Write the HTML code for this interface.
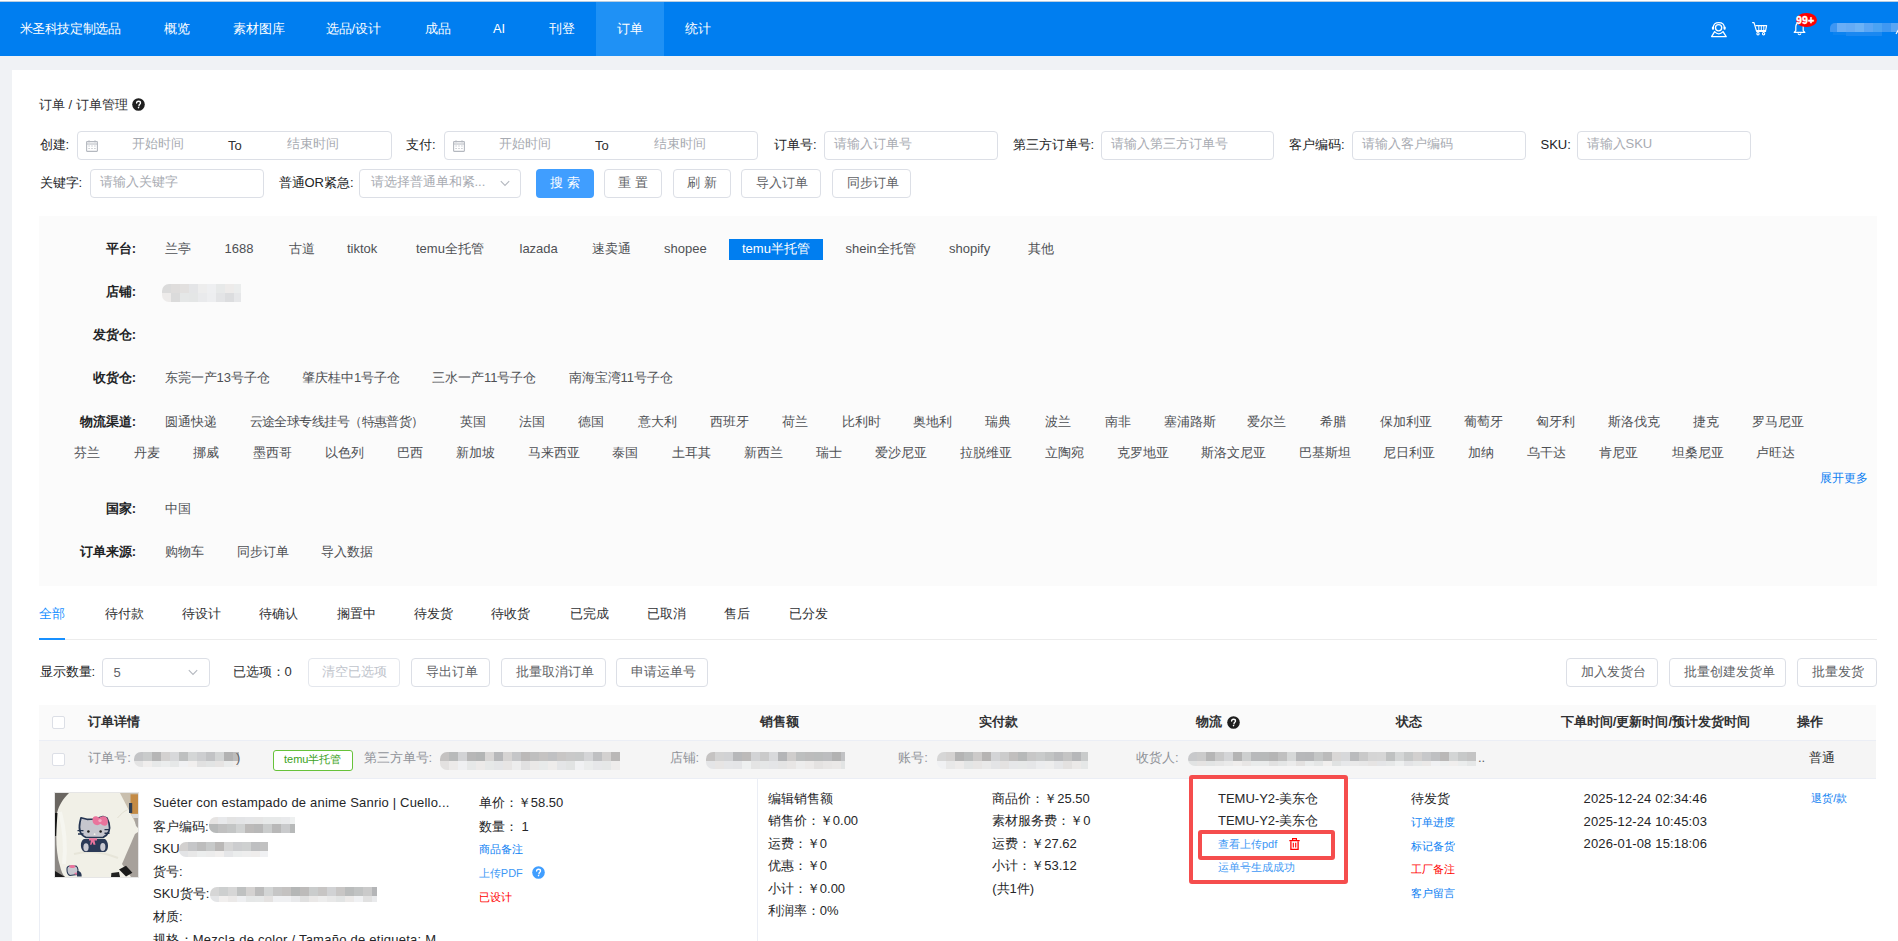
<!DOCTYPE html>
<html><head><meta charset="utf-8"><title>订单管理</title>
<style>
html,body{margin:0;padding:0;width:1898px;height:941px;overflow:hidden;background:#fff;position:relative;font-family:"Liberation Sans",sans-serif}
.t{position:absolute;white-space:nowrap;line-height:20px;font-weight:500}
.b{position:absolute}
.blur{background:repeating-linear-gradient(90deg,#dcdcdc 0 9px,#e8e8e8 9px 17px,#d2d2d2 17px 24px,#e4e4e4 24px 31px);border-radius:6px;filter:blur(1px);opacity:.95}
</style></head><body>
<div class="b" style="left:0px;top:1px;width:1898px;height:55px;background:#007ef0"></div>
<div class="b" style="left:0px;top:1px;width:1898px;height:1px;background:#b9cde0"></div>
<div class="b" style="left:596px;top:2px;width:68px;height:54px;background:#1f91f5"></div>
<span class="t " style="left:19.5px;top:19.0px;font-size:12.7px;color:#fff;letter-spacing:-0.4px">米圣科技定制选品</span>
<span class="t " style="left:163.5px;top:19.0px;font-size:12.8px;color:#fff;">概览</span>
<span class="t " style="left:232.5px;top:19.0px;font-size:12.8px;color:#fff;">素材图库</span>
<span class="t " style="left:325.5px;top:19.0px;font-size:12.8px;color:#fff;">选品/设计</span>
<span class="t " style="left:424.5px;top:19.0px;font-size:12.8px;color:#fff;">成品</span>
<span class="t " style="left:493px;top:19.0px;font-size:12.8px;color:#fff;">AI</span>
<span class="t " style="left:548.5px;top:19.0px;font-size:12.8px;color:#fff;">刊登</span>
<span class="t " style="left:616.5px;top:19.0px;font-size:12.8px;color:#fff;">订单</span>
<span class="t " style="left:685px;top:19.0px;font-size:12.8px;color:#fff;">统计</span>
<div class="b" style="left:0px;top:56px;width:1898px;height:885px;background:#f0f2f5"></div>
<div class="b" style="left:12px;top:70px;width:1886px;height:871px;background:#fff"></div>
<span class="t " style="left:39px;top:95.0px;font-size:13px;color:#303133;">订单 / 订单管理</span>
<svg class="b" style="left:132px;top:98px" width="13" height="13" viewBox="0 0 13 13"><circle cx="6.5" cy="6.5" r="6.3" fill="#1f1f1f"/><path d="M4.6 5.1c0-1.1.9-1.9 1.95-1.9 1.1 0 1.95.8 1.95 1.75 0 1.3-1.45 1.4-1.45 2.45v.35" stroke="#fff" stroke-width="1.35" fill="none" stroke-linecap="round"/><circle cx="6.55" cy="9.6" r=".8" fill="#fff"/></svg>
<span class="t " style="left:39.5px;top:135.0px;font-size:13px;color:#222325;">创建:</span>
<div class="b" style="left:77px;top:131px;width:315px;height:29px;border:1px solid #dcdfe6;border-radius:4px;background:#fff;box-sizing:border-box"></div>
<svg class="b" style="left:86px;top:139.5px" width="12" height="12" viewBox="0 0 12 12"><rect x="0.6" y="1.6" width="10.8" height="9.8" rx="0.6" fill="none" stroke="#b4b8bf" stroke-width="1.1"/><line x1="0.6" y1="4" x2="11.4" y2="4" stroke="#b4b8bf" stroke-width="1"/><line x1="3" y1="0.3" x2="3" y2="2.4" stroke="#b4b8bf" stroke-width="1"/><line x1="9" y1="0.3" x2="9" y2="2.4" stroke="#b4b8bf" stroke-width="1"/><g fill="#c4c7cc"><rect x="2.4" y="5.5" width="1.4" height="1"/><rect x="5.3" y="5.5" width="1.4" height="1"/><rect x="8.2" y="5.5" width="1.4" height="1"/><rect x="2.4" y="8" width="1.4" height="1"/><rect x="5.3" y="8" width="1.4" height="1"/><rect x="8.2" y="8" width="1.4" height="1"/></g></svg>
<span class="t " style="left:131.5px;top:133.5px;font-size:13px;color:#a8abb2;">开始时间</span>
<span class="t " style="left:228px;top:136.0px;font-size:13px;color:#303133;">To</span>
<span class="t " style="left:287px;top:133.5px;font-size:13px;color:#a8abb2;">结束时间</span>
<span class="t " style="left:406px;top:135.0px;font-size:13px;color:#222325;">支付:</span>
<div class="b" style="left:444px;top:131px;width:314px;height:29px;border:1px solid #dcdfe6;border-radius:4px;background:#fff;box-sizing:border-box"></div>
<svg class="b" style="left:453px;top:139.5px" width="12" height="12" viewBox="0 0 12 12"><rect x="0.6" y="1.6" width="10.8" height="9.8" rx="0.6" fill="none" stroke="#b4b8bf" stroke-width="1.1"/><line x1="0.6" y1="4" x2="11.4" y2="4" stroke="#b4b8bf" stroke-width="1"/><line x1="3" y1="0.3" x2="3" y2="2.4" stroke="#b4b8bf" stroke-width="1"/><line x1="9" y1="0.3" x2="9" y2="2.4" stroke="#b4b8bf" stroke-width="1"/><g fill="#c4c7cc"><rect x="2.4" y="5.5" width="1.4" height="1"/><rect x="5.3" y="5.5" width="1.4" height="1"/><rect x="8.2" y="5.5" width="1.4" height="1"/><rect x="2.4" y="8" width="1.4" height="1"/><rect x="5.3" y="8" width="1.4" height="1"/><rect x="8.2" y="8" width="1.4" height="1"/></g></svg>
<span class="t " style="left:498.5px;top:133.5px;font-size:13px;color:#a8abb2;">开始时间</span>
<span class="t " style="left:595px;top:136.0px;font-size:13px;color:#303133;">To</span>
<span class="t " style="left:654px;top:133.5px;font-size:13px;color:#a8abb2;">结束时间</span>
<span class="t " style="left:774px;top:135.0px;font-size:13px;color:#222325;">订单号:</span>
<div class="b" style="left:824px;top:131px;width:174px;height:29px;border:1px solid #dcdfe6;border-radius:4px;background:#fff;box-sizing:border-box"></div>
<span class="t " style="left:834px;top:134.0px;font-size:13px;color:#a8abb2;">请输入订单号</span>
<span class="t " style="left:1012.5px;top:135.0px;font-size:13px;color:#222325;">第三方订单号:</span>
<div class="b" style="left:1101px;top:131px;width:173px;height:29px;border:1px solid #dcdfe6;border-radius:4px;background:#fff;box-sizing:border-box"></div>
<span class="t " style="left:1110.5px;top:134.0px;font-size:13px;color:#a8abb2;">请输入第三方订单号</span>
<span class="t " style="left:1289px;top:135.0px;font-size:13px;color:#222325;">客户编码:</span>
<div class="b" style="left:1352px;top:131px;width:174px;height:29px;border:1px solid #dcdfe6;border-radius:4px;background:#fff;box-sizing:border-box"></div>
<span class="t " style="left:1361.5px;top:134.0px;font-size:13px;color:#a8abb2;">请输入客户编码</span>
<span class="t " style="left:1540.5px;top:135.0px;font-size:13px;color:#222325;">SKU:</span>
<div class="b" style="left:1577px;top:131px;width:174px;height:29px;border:1px solid #dcdfe6;border-radius:4px;background:#fff;box-sizing:border-box"></div>
<span class="t " style="left:1586.5px;top:134.0px;font-size:13px;color:#a8abb2;">请输入SKU</span>
<span class="t " style="left:39.5px;top:173.0px;font-size:13px;color:#222325;">关键字:</span>
<div class="b" style="left:90px;top:169px;width:174px;height:29px;border:1px solid #dcdfe6;border-radius:4px;background:#fff;box-sizing:border-box"></div>
<span class="t " style="left:100px;top:172.0px;font-size:13px;color:#a8abb2;">请输入关键字</span>
<span class="t " style="left:278.5px;top:173.0px;font-size:13px;color:#222325;">普通OR紧急:</span>
<div class="b" style="left:359px;top:169px;width:162px;height:29px;border:1px solid #dcdfe6;border-radius:4px;background:#fff;box-sizing:border-box"></div>
<span class="t " style="left:370.5px;top:172.0px;font-size:13px;color:#a8abb2;">请选择普通单和紧...</span>
<svg class="b" style="left:500px;top:180px" width="10" height="7" viewBox="0 0 10 7"><path d="M0.8 1.2 L5 5.4 L9.2 1.2" stroke="#b4b8bf" stroke-width="1.1" fill="none"/></svg>
<div class="b" style="left:536px;top:169px;width:58px;height:29px;background:#409eff;border-radius:4px"></div>
<span class="t " style="left:550px;top:172.5px;font-size:13px;color:#fff;">搜&nbsp;索</span>
<div class="b" style="left:604px;top:169px;width:58px;height:29px;border:1px solid #dcdfe6;border-radius:4px;background:#fff;box-sizing:border-box"></div>
<span class="t " style="left:618px;top:173.0px;font-size:13px;color:#606266;">重&nbsp;置</span>
<div class="b" style="left:673px;top:169px;width:58px;height:29px;border:1px solid #dcdfe6;border-radius:4px;background:#fff;box-sizing:border-box"></div>
<span class="t " style="left:687px;top:173.0px;font-size:13px;color:#606266;">刷&nbsp;新</span>
<div class="b" style="left:741px;top:169px;width:80px;height:29px;border:1px solid #dcdfe6;border-radius:4px;background:#fff;box-sizing:border-box"></div>
<span class="t " style="left:756px;top:173.0px;font-size:13px;color:#606266;">导入订单</span>
<div class="b" style="left:832px;top:169px;width:79px;height:29px;border:1px solid #dcdfe6;border-radius:4px;background:#fff;box-sizing:border-box"></div>
<span class="t " style="left:846.5px;top:173.0px;font-size:13px;color:#606266;">同步订单</span>
<div class="b" style="left:39px;top:216px;width:1838px;height:370px;background:#fbfbfb"></div>
<span class="t" style="right:1762px;top:239.0px;font-size:13px;color:#222325;font-weight:700">平台:</span>
<span class="t " style="left:165px;top:239.0px;font-size:13px;color:#4e5054;">兰亭</span>
<span class="t " style="left:224.5px;top:239.0px;font-size:13px;color:#4e5054;">1688</span>
<span class="t " style="left:288.5px;top:239.0px;font-size:13px;color:#4e5054;">古道</span>
<span class="t " style="left:347px;top:239.0px;font-size:13px;color:#4e5054;">tiktok</span>
<span class="t " style="left:416px;top:239.0px;font-size:13px;color:#4e5054;">temu全托管</span>
<span class="t " style="left:519.5px;top:239.0px;font-size:13px;color:#4e5054;">lazada</span>
<span class="t " style="left:591.5px;top:239.0px;font-size:13px;color:#4e5054;">速卖通</span>
<span class="t " style="left:664px;top:239.0px;font-size:13px;color:#4e5054;">shopee</span>
<span class="t " style="left:845.5px;top:239.0px;font-size:13px;color:#4e5054;">shein全托管</span>
<span class="t " style="left:949px;top:239.0px;font-size:13px;color:#4e5054;">shopify</span>
<span class="t " style="left:1027.5px;top:239.0px;font-size:13px;color:#4e5054;">其他</span>
<div class="b" style="left:729px;top:239px;width:94px;height:21px;background:#007ef0"></div>
<span class="t " style="left:742px;top:239.0px;font-size:13px;color:#fff;">temu半托管</span>
<span class="t" style="right:1762px;top:282.0px;font-size:13px;color:#222325;font-weight:700">店铺:</span>
<svg class="b" style="left:162px;top:284px" width="79" height="18" viewBox="0 0 79 18"><defs><clipPath id="c2"><rect x="0" y="0" width="99" height="18" rx="7"/></clipPath></defs><g clip-path="url(#c2)"><rect x="0" y="0" width="9" height="9" fill="#dbdbdb"/><rect x="9" y="0" width="9" height="9" fill="#dfdddc"/><rect x="18" y="0" width="9" height="9" fill="#e2e0df"/><rect x="27" y="0" width="9" height="9" fill="#e4e5e7"/><rect x="36" y="0" width="9" height="9" fill="#ededed"/><rect x="45" y="0" width="9" height="9" fill="#eeeff1"/><rect x="54" y="0" width="9" height="9" fill="#e7e9e9"/><rect x="63" y="0" width="9" height="9" fill="#edebea"/><rect x="72" y="0" width="7" height="9" fill="#ebeded"/><rect x="0" y="9" width="9" height="9" fill="#edebea"/><rect x="9" y="9" width="9" height="9" fill="#dbdbdb"/><rect x="18" y="9" width="9" height="9" fill="#e5e7e7"/><rect x="27" y="9" width="9" height="9" fill="#e4e6e6"/><rect x="36" y="9" width="9" height="9" fill="#e9eaec"/><rect x="45" y="9" width="9" height="9" fill="#edeef0"/><rect x="54" y="9" width="9" height="9" fill="#e3e4e6"/><rect x="63" y="9" width="9" height="9" fill="#dcdddf"/><rect x="72" y="9" width="7" height="9" fill="#e6e7e9"/></g></svg>
<span class="t" style="right:1762px;top:325.0px;font-size:13px;color:#222325;font-weight:700">发货仓:</span>
<span class="t" style="right:1762px;top:368.0px;font-size:13px;color:#222325;font-weight:700">收货仓:</span>
<span class="t " style="left:164.5px;top:368.0px;font-size:13px;color:#4e5054;">东莞一产13号子仓</span>
<span class="t " style="left:302px;top:368.0px;font-size:13px;color:#4e5054;">肇庆桂中1号子仓</span>
<span class="t " style="left:432px;top:368.0px;font-size:13px;color:#4e5054;">三水一产11号子仓</span>
<span class="t " style="left:568.5px;top:368.0px;font-size:13px;color:#4e5054;">南海宝湾11号子仓</span>
<span class="t" style="right:1762px;top:412.0px;font-size:13px;color:#222325;font-weight:700">物流渠道:</span>
<span class="t " style="left:164.5px;top:412.0px;font-size:13px;color:#4e5054;">圆通快递</span>
<span class="t " style="left:249.5px;top:412.0px;font-size:13px;color:#4e5054;letter-spacing:-0.55px">云途全球专线挂号（特惠普货）</span>
<span class="t " style="left:459.5px;top:412.0px;font-size:13px;color:#4e5054;">英国</span>
<span class="t " style="left:518.5px;top:412.0px;font-size:13px;color:#4e5054;">法国</span>
<span class="t " style="left:578.2px;top:412.0px;font-size:13px;color:#4e5054;">德国</span>
<span class="t " style="left:637.5px;top:412.0px;font-size:13px;color:#4e5054;">意大利</span>
<span class="t " style="left:710.4px;top:412.0px;font-size:13px;color:#4e5054;">西班牙</span>
<span class="t " style="left:781.8px;top:412.0px;font-size:13px;color:#4e5054;">荷兰</span>
<span class="t " style="left:841.5px;top:412.0px;font-size:13px;color:#4e5054;">比利时</span>
<span class="t " style="left:913.3px;top:412.0px;font-size:13px;color:#4e5054;">奥地利</span>
<span class="t " style="left:985.1px;top:412.0px;font-size:13px;color:#4e5054;">瑞典</span>
<span class="t " style="left:1044.8px;top:412.0px;font-size:13px;color:#4e5054;">波兰</span>
<span class="t " style="left:1104.5px;top:412.0px;font-size:13px;color:#4e5054;">南非</span>
<span class="t " style="left:1163.5px;top:412.0px;font-size:13px;color:#4e5054;">塞浦路斯</span>
<span class="t " style="left:1247.4px;top:412.0px;font-size:13px;color:#4e5054;">爱尔兰</span>
<span class="t " style="left:1319.9px;top:412.0px;font-size:13px;color:#4e5054;">希腊</span>
<span class="t " style="left:1379.9px;top:412.0px;font-size:13px;color:#4e5054;">保加利亚</span>
<span class="t " style="left:1464.2px;top:412.0px;font-size:13px;color:#4e5054;">葡萄牙</span>
<span class="t " style="left:1536px;top:412.0px;font-size:13px;color:#4e5054;">匈牙利</span>
<span class="t " style="left:1607.5px;top:412.0px;font-size:13px;color:#4e5054;">斯洛伐克</span>
<span class="t " style="left:1692.5px;top:412.0px;font-size:13px;color:#4e5054;">捷克</span>
<span class="t " style="left:1751.8px;top:412.0px;font-size:13px;color:#4e5054;">罗马尼亚</span>
<span class="t " style="left:74.2px;top:442.5px;font-size:13px;color:#4e5054;">芬兰</span>
<span class="t " style="left:133.5px;top:442.5px;font-size:13px;color:#4e5054;">丹麦</span>
<span class="t " style="left:193.2px;top:442.5px;font-size:13px;color:#4e5054;">挪威</span>
<span class="t " style="left:252.9px;top:442.5px;font-size:13px;color:#4e5054;">墨西哥</span>
<span class="t " style="left:324.7px;top:442.5px;font-size:13px;color:#4e5054;">以色列</span>
<span class="t " style="left:397.2px;top:442.5px;font-size:13px;color:#4e5054;">巴西</span>
<span class="t " style="left:455.5px;top:442.5px;font-size:13px;color:#4e5054;">新加坡</span>
<span class="t " style="left:528px;top:442.5px;font-size:13px;color:#4e5054;">马来西亚</span>
<span class="t " style="left:612.3px;top:442.5px;font-size:13px;color:#4e5054;">泰国</span>
<span class="t " style="left:672.3px;top:442.5px;font-size:13px;color:#4e5054;">土耳其</span>
<span class="t " style="left:743.7px;top:442.5px;font-size:13px;color:#4e5054;">新西兰</span>
<span class="t " style="left:815.5px;top:442.5px;font-size:13px;color:#4e5054;">瑞士</span>
<span class="t " style="left:875.2px;top:442.5px;font-size:13px;color:#4e5054;">爱沙尼亚</span>
<span class="t " style="left:959.9px;top:442.5px;font-size:13px;color:#4e5054;">拉脱维亚</span>
<span class="t " style="left:1044.8px;top:442.5px;font-size:13px;color:#4e5054;">立陶宛</span>
<span class="t " style="left:1116.6px;top:442.5px;font-size:13px;color:#4e5054;">克罗地亚</span>
<span class="t " style="left:1200.9px;top:442.5px;font-size:13px;color:#4e5054;">斯洛文尼亚</span>
<span class="t " style="left:1299px;top:442.5px;font-size:13px;color:#4e5054;">巴基斯坦</span>
<span class="t " style="left:1383.3px;top:442.5px;font-size:13px;color:#4e5054;">尼日利亚</span>
<span class="t " style="left:1467.6px;top:442.5px;font-size:13px;color:#4e5054;">加纳</span>
<span class="t " style="left:1526.6px;top:442.5px;font-size:13px;color:#4e5054;">乌干达</span>
<span class="t " style="left:1599.1px;top:442.5px;font-size:13px;color:#4e5054;">肯尼亚</span>
<span class="t " style="left:1671.6px;top:442.5px;font-size:13px;color:#4e5054;">坦桑尼亚</span>
<span class="t " style="left:1755.9px;top:442.5px;font-size:13px;color:#4e5054;">卢旺达</span>
<span class="t " style="left:1820px;top:467.5px;font-size:12px;color:#0b7ef2;">展开更多</span>
<span class="t" style="right:1762px;top:499.0px;font-size:13px;color:#222325;font-weight:700">国家:</span>
<span class="t " style="left:164.5px;top:499.0px;font-size:13px;color:#4e5054;">中国</span>
<span class="t" style="right:1762px;top:542.0px;font-size:13px;color:#222325;font-weight:700">订单来源:</span>
<span class="t " style="left:164.5px;top:542.0px;font-size:13px;color:#4e5054;">购物车</span>
<span class="t " style="left:236.5px;top:542.0px;font-size:13px;color:#4e5054;">同步订单</span>
<span class="t " style="left:320.5px;top:542.0px;font-size:13px;color:#4e5054;">导入数据</span>
<span class="t " style="left:39.3px;top:604.0px;font-size:13px;color:#1890ff;">全部</span>
<span class="t " style="left:104.8px;top:604.0px;font-size:13px;color:#303133;">待付款</span>
<span class="t " style="left:181.6px;top:604.0px;font-size:13px;color:#303133;">待设计</span>
<span class="t " style="left:259px;top:604.0px;font-size:13px;color:#303133;">待确认</span>
<span class="t " style="left:336.5px;top:604.0px;font-size:13px;color:#303133;">搁置中</span>
<span class="t " style="left:414px;top:604.0px;font-size:13px;color:#303133;">待发货</span>
<span class="t " style="left:491.3px;top:604.0px;font-size:13px;color:#303133;">待收货</span>
<span class="t " style="left:569.5px;top:604.0px;font-size:13px;color:#303133;">已完成</span>
<span class="t " style="left:646.9px;top:604.0px;font-size:13px;color:#303133;">已取消</span>
<span class="t " style="left:723.7px;top:604.0px;font-size:13px;color:#303133;">售后</span>
<span class="t " style="left:789.2px;top:604.0px;font-size:13px;color:#303133;">已分发</span>
<div class="b" style="left:39px;top:639px;width:1838px;height:1px;background:#ececec"></div>
<div class="b" style="left:39px;top:638px;width:26px;height:2px;background:#1890ff"></div>
<span class="t " style="left:39.5px;top:661.5px;font-size:13px;color:#222325;">显示数量:</span>
<div class="b" style="left:102px;top:658px;width:108px;height:29px;border:1px solid #dcdfe6;border-radius:4px;background:#fff;box-sizing:border-box"></div>
<span class="t " style="left:113.5px;top:662.5px;font-size:13px;color:#606266;">5</span>
<svg class="b" style="left:188px;top:668.5px" width="10" height="7" viewBox="0 0 10 7"><path d="M0.8 1.2 L5 5.4 L9.2 1.2" stroke="#b4b8bf" stroke-width="1.1" fill="none"/></svg>
<span class="t " style="left:232.5px;top:661.5px;font-size:13px;color:#303133;">已选项：0</span>
<div class="b" style="left:308px;top:658px;width:92px;height:29px;border:1px solid #e4e7ed;border-radius:4px;background:#fff;box-sizing:border-box"></div>
<span class="t " style="left:322px;top:662.0px;font-size:13px;color:#c0c4cc;">清空已选项</span>
<div class="b" style="left:411px;top:658px;width:79px;height:29px;border:1px solid #dcdfe6;border-radius:4px;background:#fff;box-sizing:border-box"></div>
<span class="t " style="left:425.5px;top:662.0px;font-size:13px;color:#606266;">导出订单</span>
<div class="b" style="left:501px;top:658px;width:105px;height:29px;border:1px solid #dcdfe6;border-radius:4px;background:#fff;box-sizing:border-box"></div>
<span class="t " style="left:515.5px;top:662.0px;font-size:13px;color:#606266;">批量取消订单</span>
<div class="b" style="left:616px;top:658px;width:92px;height:29px;border:1px solid #dcdfe6;border-radius:4px;background:#fff;box-sizing:border-box"></div>
<span class="t " style="left:631px;top:662.0px;font-size:13px;color:#606266;">申请运单号</span>
<div class="b" style="left:1566px;top:658px;width:92px;height:29px;border:1px solid #dcdfe6;border-radius:4px;background:#fff;box-sizing:border-box"></div>
<span class="t " style="left:1580.5px;top:662.0px;font-size:13px;color:#606266;">加入发货台</span>
<div class="b" style="left:1669px;top:658px;width:117px;height:29px;border:1px solid #dcdfe6;border-radius:4px;background:#fff;box-sizing:border-box"></div>
<span class="t " style="left:1683.5px;top:662.0px;font-size:13px;color:#606266;">批量创建发货单</span>
<div class="b" style="left:1797px;top:658px;width:80px;height:29px;border:1px solid #dcdfe6;border-radius:4px;background:#fff;box-sizing:border-box"></div>
<span class="t " style="left:1811.5px;top:662.0px;font-size:13px;color:#606266;">批量发货</span>
<div class="b" style="left:39px;top:705px;width:1837px;height:36px;background:#fafafa;border-bottom:1px solid #ebeef5;box-sizing:border-box"></div>
<div class="b" style="left:39px;top:741px;width:1837px;height:38px;background:#f5f5f5;border-bottom:1px solid #ebeef5;box-sizing:border-box"></div>
<div class="b" style="left:52px;top:716px;width:13px;height:13px;border:1px solid #dcdfe6;border-radius:2px;background:#fff;box-sizing:border-box"></div>
<span class="t " style="left:88.2px;top:712.0px;font-size:13px;color:#303133;font-weight:700;">订单详情</span>
<span class="t " style="left:760px;top:712.0px;font-size:13px;color:#303133;font-weight:700;">销售额</span>
<span class="t " style="left:978.5px;top:712.0px;font-size:13px;color:#303133;font-weight:700;">实付款</span>
<span class="t " style="left:1196.4px;top:712.0px;font-size:13px;color:#303133;font-weight:700;">物流</span>
<svg class="b" style="left:1227px;top:715.5px" width="13" height="13" viewBox="0 0 13 13"><circle cx="6.5" cy="6.5" r="6.3" fill="#1f1f1f"/><path d="M4.6 5.1c0-1.1.9-1.9 1.95-1.9 1.1 0 1.95.8 1.95 1.75 0 1.3-1.45 1.4-1.45 2.45v.35" stroke="#fff" stroke-width="1.35" fill="none" stroke-linecap="round"/><circle cx="6.55" cy="9.6" r=".8" fill="#fff"/></svg>
<span class="t " style="left:1395.8px;top:712.0px;font-size:13px;color:#303133;font-weight:700;">状态</span>
<span class="t " style="left:1560.8px;top:712.0px;font-size:13px;color:#303133;font-weight:700;">下单时间/更新时间/预计发货时间</span>
<span class="t " style="left:1796.7px;top:712.0px;font-size:13px;color:#303133;font-weight:700;">操作</span>
<div class="b" style="left:52px;top:753px;width:13px;height:13px;border:1px solid #dcdfe6;border-radius:2px;background:#fff;box-sizing:border-box"></div>
<span class="t " style="left:88.2px;top:748.0px;font-size:13px;color:#909399;">订单号:</span>
<svg class="b" style="left:134px;top:752px" width="105" height="15" viewBox="0 0 105 15"><defs><clipPath id="c3"><rect x="0" y="0" width="125" height="15" rx="7"/></clipPath></defs><g clip-path="url(#c3)"><rect x="0" y="0" width="9" height="9" fill="#c3c4c6"/><rect x="9" y="0" width="9" height="9" fill="#c9cbcb"/><rect x="18" y="0" width="9" height="9" fill="#b6b6b6"/><rect x="27" y="0" width="9" height="9" fill="#d3d1d0"/><rect x="36" y="0" width="9" height="9" fill="#d7d8da"/><rect x="45" y="0" width="9" height="9" fill="#bec0c0"/><rect x="54" y="0" width="9" height="9" fill="#d4d6d6"/><rect x="63" y="0" width="9" height="9" fill="#cdced0"/><rect x="72" y="0" width="9" height="9" fill="#c2c3c5"/><rect x="81" y="0" width="9" height="9" fill="#d3d5d5"/><rect x="90" y="0" width="9" height="9" fill="#b2b2b2"/><rect x="99" y="0" width="6" height="9" fill="#bcbcbc"/><rect x="0" y="9" width="9" height="6" fill="#e4e4e4"/><rect x="9" y="9" width="9" height="6" fill="#f0eeed"/><rect x="18" y="9" width="9" height="6" fill="#e7e9e9"/><rect x="27" y="9" width="9" height="6" fill="#ebeded"/><rect x="36" y="9" width="9" height="6" fill="#e6e8e8"/><rect x="45" y="9" width="9" height="6" fill="#f0f1f3"/><rect x="54" y="9" width="9" height="6" fill="#f1efee"/><rect x="63" y="9" width="9" height="6" fill="#e1e1e1"/><rect x="72" y="9" width="9" height="6" fill="#e2e4e4"/><rect x="81" y="9" width="9" height="6" fill="#e6e4e3"/><rect x="90" y="9" width="9" height="6" fill="#eaecec"/><rect x="99" y="9" width="6" height="6" fill="#efedec"/></g></svg>
<span class="t " style="left:236px;top:748.0px;font-size:13px;color:#606266;">)</span>
<div class="b" style="left:273px;top:749.5px;width:80px;height:21.0px;border:1px solid #67c23a;border-radius:3px;background:#fff;box-sizing:border-box"></div>
<span class="t " style="left:284px;top:748.5px;font-size:11px;color:#3ba21a;">temu半托管</span>
<span class="t " style="left:363.5px;top:748.0px;font-size:13px;color:#909399;">第三方单号:</span>
<svg class="b" style="left:440px;top:752px" width="180" height="18" viewBox="0 0 180 18"><defs><clipPath id="c4"><rect x="0" y="0" width="200" height="18" rx="7"/></clipPath></defs><g clip-path="url(#c4)"><rect x="0" y="0" width="9" height="9" fill="#c4c2c1"/><rect x="9" y="0" width="9" height="9" fill="#b8baba"/><rect x="18" y="0" width="9" height="9" fill="#d2d3d5"/><rect x="27" y="0" width="9" height="9" fill="#b7b7b7"/><rect x="36" y="0" width="9" height="9" fill="#b3b5b5"/><rect x="45" y="0" width="9" height="9" fill="#d8d6d5"/><rect x="54" y="0" width="9" height="9" fill="#b7b8ba"/><rect x="63" y="0" width="9" height="9" fill="#d6d4d3"/><rect x="72" y="0" width="9" height="9" fill="#c5c6c8"/><rect x="81" y="0" width="9" height="9" fill="#bbb9b8"/><rect x="90" y="0" width="9" height="9" fill="#bfbfbf"/><rect x="99" y="0" width="9" height="9" fill="#c5c3c2"/><rect x="108" y="0" width="9" height="9" fill="#c0c1c3"/><rect x="117" y="0" width="9" height="9" fill="#c8c6c5"/><rect x="126" y="0" width="9" height="9" fill="#c9c9c9"/><rect x="135" y="0" width="9" height="9" fill="#c7c9c9"/><rect x="144" y="0" width="9" height="9" fill="#d4d5d7"/><rect x="153" y="0" width="9" height="9" fill="#bfc0c2"/><rect x="162" y="0" width="9" height="9" fill="#d3d1d0"/><rect x="171" y="0" width="9" height="9" fill="#bab8b7"/><rect x="0" y="9" width="9" height="9" fill="#e3e1e0"/><rect x="9" y="9" width="9" height="9" fill="#eceae9"/><rect x="18" y="9" width="9" height="9" fill="#eff0f2"/><rect x="27" y="9" width="9" height="9" fill="#e6e8e8"/><rect x="36" y="9" width="9" height="9" fill="#eceae9"/><rect x="45" y="9" width="9" height="9" fill="#e6e8e8"/><rect x="54" y="9" width="9" height="9" fill="#e4e5e7"/><rect x="63" y="9" width="9" height="9" fill="#e7e5e4"/><rect x="72" y="9" width="9" height="9" fill="#ededed"/><rect x="81" y="9" width="9" height="9" fill="#e1e1e1"/><rect x="90" y="9" width="9" height="9" fill="#eae8e7"/><rect x="99" y="9" width="9" height="9" fill="#e8eaea"/><rect x="108" y="9" width="9" height="9" fill="#eeeceb"/><rect x="117" y="9" width="9" height="9" fill="#e4e5e7"/><rect x="126" y="9" width="9" height="9" fill="#e1e3e3"/><rect x="135" y="9" width="9" height="9" fill="#f0f1f3"/><rect x="144" y="9" width="9" height="9" fill="#eaecec"/><rect x="153" y="9" width="9" height="9" fill="#e6e7e9"/><rect x="162" y="9" width="9" height="9" fill="#e5e7e7"/><rect x="171" y="9" width="9" height="9" fill="#eeeceb"/></g></svg>
<span class="t " style="left:669.5px;top:748.0px;font-size:13px;color:#909399;">店铺:</span>
<svg class="b" style="left:706px;top:752px" width="139" height="17" viewBox="0 0 139 17"><defs><clipPath id="c5"><rect x="0" y="0" width="159" height="17" rx="7"/></clipPath></defs><g clip-path="url(#c5)"><rect x="0" y="0" width="9" height="9" fill="#c5c3c2"/><rect x="9" y="0" width="9" height="9" fill="#d3d3d3"/><rect x="18" y="0" width="9" height="9" fill="#d1d2d4"/><rect x="27" y="0" width="9" height="9" fill="#b7b8ba"/><rect x="36" y="0" width="9" height="9" fill="#bcbab9"/><rect x="45" y="0" width="9" height="9" fill="#d2d3d5"/><rect x="54" y="0" width="9" height="9" fill="#cacaca"/><rect x="63" y="0" width="9" height="9" fill="#d8d9db"/><rect x="72" y="0" width="9" height="9" fill="#b4b5b7"/><rect x="81" y="0" width="9" height="9" fill="#cfcdcc"/><rect x="90" y="0" width="9" height="9" fill="#bdbfbf"/><rect x="99" y="0" width="9" height="9" fill="#bcbcbc"/><rect x="108" y="0" width="9" height="9" fill="#babcbc"/><rect x="117" y="0" width="9" height="9" fill="#bcbdbf"/><rect x="126" y="0" width="9" height="9" fill="#b2b2b2"/><rect x="135" y="0" width="4" height="9" fill="#c1c2c4"/><rect x="0" y="9" width="9" height="8" fill="#e4e5e7"/><rect x="9" y="9" width="9" height="8" fill="#e7e5e4"/><rect x="18" y="9" width="9" height="8" fill="#e5e6e8"/><rect x="27" y="9" width="9" height="8" fill="#e4e5e7"/><rect x="36" y="9" width="9" height="8" fill="#eef0f0"/><rect x="45" y="9" width="9" height="8" fill="#e4e4e4"/><rect x="54" y="9" width="9" height="8" fill="#e5e7e7"/><rect x="63" y="9" width="9" height="8" fill="#e4e5e7"/><rect x="72" y="9" width="9" height="8" fill="#e4e4e4"/><rect x="81" y="9" width="9" height="8" fill="#e8e6e5"/><rect x="90" y="9" width="9" height="8" fill="#ededed"/><rect x="99" y="9" width="9" height="8" fill="#eceae9"/><rect x="108" y="9" width="9" height="8" fill="#e4e2e1"/><rect x="117" y="9" width="9" height="8" fill="#e8e6e5"/><rect x="126" y="9" width="9" height="8" fill="#eae8e7"/><rect x="135" y="9" width="4" height="8" fill="#e2e4e4"/></g></svg>
<span class="t " style="left:898.3px;top:748.0px;font-size:13px;color:#909399;">账号:</span>
<svg class="b" style="left:937px;top:752px" width="151" height="17" viewBox="0 0 151 17"><defs><clipPath id="c6"><rect x="0" y="0" width="171" height="17" rx="7"/></clipPath></defs><g clip-path="url(#c6)"><rect x="0" y="0" width="9" height="9" fill="#d6d6d6"/><rect x="9" y="0" width="9" height="9" fill="#d4d2d1"/><rect x="18" y="0" width="9" height="9" fill="#b4b4b4"/><rect x="27" y="0" width="9" height="9" fill="#bbbdbd"/><rect x="36" y="0" width="9" height="9" fill="#cccac9"/><rect x="45" y="0" width="9" height="9" fill="#b6b4b3"/><rect x="54" y="0" width="9" height="9" fill="#d3d4d6"/><rect x="63" y="0" width="9" height="9" fill="#cccccc"/><rect x="72" y="0" width="9" height="9" fill="#c1bfbe"/><rect x="81" y="0" width="9" height="9" fill="#b7b9b9"/><rect x="90" y="0" width="9" height="9" fill="#c7c7c7"/><rect x="99" y="0" width="9" height="9" fill="#c9cbcb"/><rect x="108" y="0" width="9" height="9" fill="#c2c4c4"/><rect x="117" y="0" width="9" height="9" fill="#babbbd"/><rect x="126" y="0" width="9" height="9" fill="#c4c4c4"/><rect x="135" y="0" width="9" height="9" fill="#b6b7b9"/><rect x="144" y="0" width="7" height="9" fill="#c9cbcb"/><rect x="0" y="9" width="9" height="8" fill="#f0f1f3"/><rect x="9" y="9" width="9" height="8" fill="#e8e8e8"/><rect x="18" y="9" width="9" height="8" fill="#edebea"/><rect x="27" y="9" width="9" height="8" fill="#e3e5e5"/><rect x="36" y="9" width="9" height="8" fill="#e7e5e4"/><rect x="45" y="9" width="9" height="8" fill="#e9e9e9"/><rect x="54" y="9" width="9" height="8" fill="#e3e4e6"/><rect x="63" y="9" width="9" height="8" fill="#e4e2e1"/><rect x="72" y="9" width="9" height="8" fill="#e6e7e9"/><rect x="81" y="9" width="9" height="8" fill="#e6e8e8"/><rect x="90" y="9" width="9" height="8" fill="#e5e6e8"/><rect x="99" y="9" width="9" height="8" fill="#ebecee"/><rect x="108" y="9" width="9" height="8" fill="#ededed"/><rect x="117" y="9" width="9" height="8" fill="#e5e6e8"/><rect x="126" y="9" width="9" height="8" fill="#e3e1e0"/><rect x="135" y="9" width="9" height="8" fill="#ebe9e8"/><rect x="144" y="9" width="7" height="8" fill="#e5e7e7"/></g></svg>
<span class="t " style="left:1136px;top:748.0px;font-size:13px;color:#909399;">收货人:</span>
<svg class="b" style="left:1188px;top:752px" width="288" height="14" viewBox="0 0 288 14"><defs><clipPath id="c7"><rect x="0" y="0" width="308" height="14" rx="7"/></clipPath></defs><g clip-path="url(#c7)"><rect x="0" y="0" width="9" height="9" fill="#c8c9cb"/><rect x="9" y="0" width="9" height="9" fill="#cbcbcb"/><rect x="18" y="0" width="9" height="9" fill="#b6b6b6"/><rect x="27" y="0" width="9" height="9" fill="#c9c9c9"/><rect x="36" y="0" width="9" height="9" fill="#d4d5d7"/><rect x="45" y="0" width="9" height="9" fill="#b4b4b4"/><rect x="54" y="0" width="9" height="9" fill="#cdcfcf"/><rect x="63" y="0" width="9" height="9" fill="#b8b9bb"/><rect x="72" y="0" width="9" height="9" fill="#b7b9b9"/><rect x="81" y="0" width="9" height="9" fill="#b5b5b5"/><rect x="90" y="0" width="9" height="9" fill="#c0c0c0"/><rect x="99" y="0" width="9" height="9" fill="#d6d8d8"/><rect x="108" y="0" width="9" height="9" fill="#b7b8ba"/><rect x="117" y="0" width="9" height="9" fill="#b6b7b9"/><rect x="126" y="0" width="9" height="9" fill="#c4c6c6"/><rect x="135" y="0" width="9" height="9" fill="#bbbbbb"/><rect x="144" y="0" width="9" height="9" fill="#d9d7d6"/><rect x="153" y="0" width="9" height="9" fill="#d7d8da"/><rect x="162" y="0" width="9" height="9" fill="#babbbd"/><rect x="171" y="0" width="9" height="9" fill="#c9c9c9"/><rect x="180" y="0" width="9" height="9" fill="#d5d5d5"/><rect x="189" y="0" width="9" height="9" fill="#d6d6d6"/><rect x="198" y="0" width="9" height="9" fill="#bfc1c1"/><rect x="207" y="0" width="9" height="9" fill="#d4d6d6"/><rect x="216" y="0" width="9" height="9" fill="#c6c8c8"/><rect x="225" y="0" width="9" height="9" fill="#d2d0cf"/><rect x="234" y="0" width="9" height="9" fill="#c7c8ca"/><rect x="243" y="0" width="9" height="9" fill="#bfc0c2"/><rect x="252" y="0" width="9" height="9" fill="#bab8b7"/><rect x="261" y="0" width="9" height="9" fill="#d3d5d5"/><rect x="270" y="0" width="9" height="9" fill="#c7c9c9"/><rect x="279" y="0" width="9" height="9" fill="#c4c4c4"/><rect x="0" y="9" width="9" height="5" fill="#e1e3e3"/><rect x="9" y="9" width="9" height="5" fill="#e5e3e2"/><rect x="18" y="9" width="9" height="5" fill="#e2e4e4"/><rect x="27" y="9" width="9" height="5" fill="#e6e6e6"/><rect x="36" y="9" width="9" height="5" fill="#eaeaea"/><rect x="45" y="9" width="9" height="5" fill="#efedec"/><rect x="54" y="9" width="9" height="5" fill="#e8e6e5"/><rect x="63" y="9" width="9" height="5" fill="#e9ebeb"/><rect x="72" y="9" width="9" height="5" fill="#e9ebeb"/><rect x="81" y="9" width="9" height="5" fill="#e1e1e1"/><rect x="90" y="9" width="9" height="5" fill="#e4e6e6"/><rect x="99" y="9" width="9" height="5" fill="#ebebeb"/><rect x="108" y="9" width="9" height="5" fill="#e3e1e0"/><rect x="117" y="9" width="9" height="5" fill="#eaecec"/><rect x="126" y="9" width="9" height="5" fill="#e4e6e6"/><rect x="135" y="9" width="9" height="5" fill="#f1efee"/><rect x="144" y="9" width="9" height="5" fill="#e0e2e2"/><rect x="153" y="9" width="9" height="5" fill="#e7e8ea"/><rect x="162" y="9" width="9" height="5" fill="#e9e9e9"/><rect x="171" y="9" width="9" height="5" fill="#e7e7e7"/><rect x="180" y="9" width="9" height="5" fill="#e6e4e3"/><rect x="189" y="9" width="9" height="5" fill="#e4e5e7"/><rect x="198" y="9" width="9" height="5" fill="#e6e8e8"/><rect x="207" y="9" width="9" height="5" fill="#eef0f0"/><rect x="216" y="9" width="9" height="5" fill="#e3e4e6"/><rect x="225" y="9" width="9" height="5" fill="#e7e9e9"/><rect x="234" y="9" width="9" height="5" fill="#ebe9e8"/><rect x="243" y="9" width="9" height="5" fill="#f0f1f3"/><rect x="252" y="9" width="9" height="5" fill="#edefef"/><rect x="261" y="9" width="9" height="5" fill="#f0eeed"/><rect x="270" y="9" width="9" height="5" fill="#ebeded"/><rect x="279" y="9" width="9" height="5" fill="#e5e7e7"/></g></svg>
<span class="t " style="left:1478px;top:748.0px;font-size:13px;color:#606266;">..</span>
<span class="t " style="left:1809.3px;top:748.0px;font-size:13px;color:#303133;">普通</span>
<div class="b" style="left:39px;top:779px;width:1px;height:162px;background:#ebeef5"></div>
<div class="b" style="left:757px;top:779px;width:1px;height:162px;background:#ebeef5"></div>
<svg class="b" style="left:54px;top:792px" width="85" height="86" viewBox="0 0 85 86"><rect x="0" y="0" width="85" height="86" fill="#e6e6e6"/><rect x="1" y="1" width="83" height="84" fill="#f1f0e7"/><path d="M1 1 L15 1 C9 7 5 13 3 21 L1 21 Z" fill="#6a6661"/><path d="M1 21 L3.5 21 C3 28 2.5 36 2.3 44 L1 44 Z" fill="#161616"/><path d="M1 44 L2.3 44 C2.3 56 3.5 66 6 74 C7 79 9 83 11 85 L1 85 Z" fill="#8c8884"/><path d="M1 79 L11 85 L1 85 Z" fill="#1a1a1a"/><path d="M66 1 L84 1 L84 36 Z" fill="#c9bfae"/><rect x="76.5" y="2.3" width="7.5" height="19.5" fill="#c48b45"/><rect x="75" y="11" width="3.2" height="10" fill="#2f3f55"/><path d="M77 22 L84 22 L84 26 L79 26 Z" fill="#d8d8d8"/><path d="M80 26 L84 26 L84 36 L82 34 Z" fill="#a9a49f"/><path d="M81 42 L84 40 L84 85 L77 85 L68 72 Z" fill="#a7a19b"/><path d="M65 77.5 L72 73.8 L78.4 80.8 L72 84.5 Z" fill="#1b1b1b"/><path d="M57.4 81 L65 80 L66 85 L57 85 Z" fill="#222"/><path d="M6 20 C10 35 12 55 10 72" stroke="#f8f8f3" stroke-width="4" fill="none" opacity=".7"/><path d="M20 62 C35 58 50 60 64 66" stroke="#e7e5d9" stroke-width="2" fill="none"/><path d="M63.5 26 C67 22 70 19 73.5 17.8" stroke="#e2dfd2" stroke-width="1" fill="none"/><path d="M26 30 L27 25.8 L33 27.3 L41 27 L49 24.5 L53 26 L55 31 C56.5 37 55 42.5 49 45.5 L32 45.5 C26 43 24.5 37 26 30 Z" fill="#c6c6ce" stroke="#253552" stroke-width="1.7" stroke-linejoin="round"/><path d="M38.5 28.5 C38 24 42 23 45.5 25.8 C48.5 23 54 24 53.8 29 C54.5 34 50 35.2 46.5 31.8 C43.5 34.5 38.8 33 38.5 28.5 Z" fill="#e9739c"/><circle cx="46" cy="28.6" r="1.7" fill="#f5aac4"/><circle cx="34.4" cy="39.4" r="1.25" fill="#1b1b1b"/><circle cx="46.6" cy="39.6" r="1.25" fill="#1b1b1b"/><circle cx="40.6" cy="42.2" r="0.9" fill="#f4f2ea"/><path d="M23.5 38.6h6M24 42h5.5M50.5 37.6h5.3M50.5 41.2h5" stroke="#22314d" stroke-width="1.4"/><path d="M30 47 C25.5 49 26 58.5 30.5 60 L51 60 C55 58.5 55 49.5 51 47 Z" fill="#2b3a57"/><ellipse cx="32" cy="55.3" rx="2.6" ry="4" fill="#cacad2"/><ellipse cx="48.8" cy="55" rx="2.6" ry="4" fill="#cacad2"/><path d="M35 46.2 L43 46.2 L43 48.5 L40.5 48.5 L41.5 52.7 L39.5 52.7 L38.5 50 L37.5 52.7 L36 52.7 L37 48.5 L35 48.5 Z" fill="#e9739c"/><g transform="translate(12,72)"><path d="M1 6 C0.5 3 2.5 1.5 5 2.2 L10 2 C12.5 3.5 12.5 8 11 10.5 L4 11.5 C1.5 10.5 1 8.5 1 6 Z" fill="#c8c8d0" stroke="#2a3a56" stroke-width="1.1"/><path d="M3 2.5 C4 0.5 8.5 0.5 9.5 2.5 C8.5 4.5 4 4.5 3 2.5 Z" fill="#e9739c"/><path d="M11 7 C14 6.5 16 9 15.6 12.5 L11 12.5 Z" fill="#2a3a56"/><path d="M8 9 L11 8.5 L10.5 11.5 Z" fill="#e9739c"/></g></svg>

<span class="t " style="left:153px;top:792.7px;font-size:13px;color:#252628;letter-spacing:0.19px">Suéter con estampado de anime Sanrio | Cuello...</span>
<span class="t " style="left:153px;top:816.5px;font-size:13px;color:#252628;">客户编码:</span>
<svg class="b" style="left:209px;top:817px" width="86" height="16" viewBox="0 0 86 16"><defs><clipPath id="c8"><rect x="0" y="0" width="106" height="16" rx="7"/></clipPath></defs><g clip-path="url(#c8)"><rect x="0" y="0" width="9" height="7" fill="#e6e4e3"/><rect x="9" y="0" width="9" height="7" fill="#e8e9eb"/><rect x="18" y="0" width="9" height="7" fill="#e3e3e3"/><rect x="27" y="0" width="9" height="7" fill="#e3e4e6"/><rect x="36" y="0" width="9" height="7" fill="#e5e6e8"/><rect x="45" y="0" width="9" height="7" fill="#e6e6e6"/><rect x="54" y="0" width="9" height="7" fill="#e7e9e9"/><rect x="63" y="0" width="9" height="7" fill="#e7e9e9"/><rect x="72" y="0" width="9" height="7" fill="#e9eaec"/><rect x="81" y="0" width="5" height="7" fill="#eef0f0"/><rect x="0" y="7" width="9" height="9" fill="#b7b9b9"/><rect x="9" y="7" width="9" height="9" fill="#c0c0c0"/><rect x="18" y="7" width="9" height="9" fill="#c3c5c5"/><rect x="27" y="7" width="9" height="9" fill="#d0d2d2"/><rect x="36" y="7" width="9" height="9" fill="#bcbab9"/><rect x="45" y="7" width="9" height="9" fill="#b8b8b8"/><rect x="54" y="7" width="9" height="9" fill="#cacccc"/><rect x="63" y="7" width="9" height="9" fill="#b8b8b8"/><rect x="72" y="7" width="9" height="9" fill="#c9cacc"/><rect x="81" y="7" width="5" height="9" fill="#b7b9b9"/></g></svg>
<span class="t " style="left:153px;top:838.8px;font-size:13px;color:#252628;">SKU.</span>
<svg class="b" style="left:179px;top:842px" width="89" height="15" viewBox="0 0 89 15"><defs><clipPath id="c9"><rect x="0" y="0" width="109" height="15" rx="7"/></clipPath></defs><g clip-path="url(#c9)"><rect x="0" y="0" width="9" height="9" fill="#d2d0cf"/><rect x="9" y="0" width="9" height="9" fill="#c5c6c8"/><rect x="18" y="0" width="9" height="9" fill="#bdbdbd"/><rect x="27" y="0" width="9" height="9" fill="#c7c9c9"/><rect x="36" y="0" width="9" height="9" fill="#bab8b7"/><rect x="45" y="0" width="9" height="9" fill="#d5d5d5"/><rect x="54" y="0" width="9" height="9" fill="#cccdcf"/><rect x="63" y="0" width="9" height="9" fill="#ced0d0"/><rect x="72" y="0" width="9" height="9" fill="#bebfc1"/><rect x="81" y="0" width="8" height="9" fill="#c1c1c1"/><rect x="0" y="9" width="9" height="6" fill="#e3e4e6"/><rect x="9" y="9" width="9" height="6" fill="#e8e8e8"/><rect x="18" y="9" width="9" height="6" fill="#eceeee"/><rect x="27" y="9" width="9" height="6" fill="#ececec"/><rect x="36" y="9" width="9" height="6" fill="#f1efee"/><rect x="45" y="9" width="9" height="6" fill="#e5e6e8"/><rect x="54" y="9" width="9" height="6" fill="#ebeded"/><rect x="63" y="9" width="9" height="6" fill="#eeeeee"/><rect x="72" y="9" width="9" height="6" fill="#efedec"/><rect x="81" y="9" width="8" height="6" fill="#f0f1f3"/></g></svg>
<span class="t " style="left:153px;top:861.9px;font-size:13px;color:#252628;">货号:</span>
<span class="t " style="left:153px;top:883.8px;font-size:13px;color:#252628;">SKU货号:</span>
<svg class="b" style="left:210px;top:887px" width="167" height="15" viewBox="0 0 167 15"><defs><clipPath id="c10"><rect x="0" y="0" width="187" height="15" rx="7"/></clipPath></defs><g clip-path="url(#c10)"><rect x="0" y="0" width="9" height="9" fill="#d6d6d6"/><rect x="9" y="0" width="9" height="9" fill="#cdcfcf"/><rect x="18" y="0" width="9" height="9" fill="#d6d6d6"/><rect x="27" y="0" width="9" height="9" fill="#bfc1c1"/><rect x="36" y="0" width="9" height="9" fill="#d4d2d1"/><rect x="45" y="0" width="9" height="9" fill="#bcbcbc"/><rect x="54" y="0" width="9" height="9" fill="#d3d5d5"/><rect x="63" y="0" width="9" height="9" fill="#c6c6c6"/><rect x="72" y="0" width="9" height="9" fill="#c4c2c1"/><rect x="81" y="0" width="9" height="9" fill="#b4b6b6"/><rect x="90" y="0" width="9" height="9" fill="#bdbbba"/><rect x="99" y="0" width="9" height="9" fill="#cacccc"/><rect x="108" y="0" width="9" height="9" fill="#c7c5c4"/><rect x="117" y="0" width="9" height="9" fill="#d1d2d4"/><rect x="126" y="0" width="9" height="9" fill="#c8c6c5"/><rect x="135" y="0" width="9" height="9" fill="#babcbc"/><rect x="144" y="0" width="9" height="9" fill="#c1c3c3"/><rect x="153" y="0" width="9" height="9" fill="#cacaca"/><rect x="162" y="0" width="5" height="9" fill="#b4b5b7"/><rect x="0" y="9" width="9" height="6" fill="#e4e5e7"/><rect x="9" y="9" width="9" height="6" fill="#f1efee"/><rect x="18" y="9" width="9" height="6" fill="#ebe9e8"/><rect x="27" y="9" width="9" height="6" fill="#eeeff1"/><rect x="36" y="9" width="9" height="6" fill="#e5e7e7"/><rect x="45" y="9" width="9" height="6" fill="#e6e8e8"/><rect x="54" y="9" width="9" height="6" fill="#e4e2e1"/><rect x="63" y="9" width="9" height="6" fill="#eff0f2"/><rect x="72" y="9" width="9" height="6" fill="#eff0f2"/><rect x="81" y="9" width="9" height="6" fill="#e8e9eb"/><rect x="90" y="9" width="9" height="6" fill="#e0e0e0"/><rect x="99" y="9" width="9" height="6" fill="#eae8e7"/><rect x="108" y="9" width="9" height="6" fill="#ededed"/><rect x="117" y="9" width="9" height="6" fill="#e8e8e8"/><rect x="126" y="9" width="9" height="6" fill="#e2e4e4"/><rect x="135" y="9" width="9" height="6" fill="#eceae9"/><rect x="144" y="9" width="9" height="6" fill="#f0f1f3"/><rect x="153" y="9" width="9" height="6" fill="#e1e1e1"/><rect x="162" y="9" width="5" height="6" fill="#e9eaec"/></g></svg>
<span class="t " style="left:153px;top:907.3px;font-size:13px;color:#252628;">材质:</span>
<span class="t " style="left:153px;top:929.5px;font-size:13px;color:#252628;letter-spacing:0.25px">规格：Mezcla de color / Tamaño de etiqueta: M</span>
<span class="t " style="left:478.8px;top:792.7px;font-size:13px;color:#252628;">单价：￥58.50</span>
<span class="t " style="left:478.8px;top:816.5px;font-size:13px;color:#252628;">数量：&nbsp;1</span>
<span class="t " style="left:478.8px;top:838.8px;font-size:11px;color:#0b7ef2;">商品备注</span>
<span class="t " style="left:478.8px;top:862.7px;font-size:11px;color:#3d98f5;">上传PDF</span>
<svg class="b" style="left:532px;top:866px" width="13" height="13" viewBox="0 0 13 13"><circle cx="6.5" cy="6.5" r="6.3" fill="#409eff"/><path d="M4.6 5.1c0-1.1.9-1.9 1.95-1.9 1.1 0 1.95.8 1.95 1.75 0 1.3-1.45 1.4-1.45 2.45v.35" stroke="#fff" stroke-width="1.35" fill="none" stroke-linecap="round"/><circle cx="6.55" cy="9.6" r=".8" fill="#fff"/></svg>
<span class="t " style="left:478.8px;top:886.5px;font-size:11px;color:#f00;">已设计</span>
<span class="t " style="left:767.8px;top:788.7px;font-size:13px;color:#252628;">编辑销售额</span>
<span class="t " style="left:767.8px;top:810.6px;font-size:13px;color:#252628;">销售价：￥0.00</span>
<span class="t " style="left:767.8px;top:833.5px;font-size:13px;color:#252628;">运费：￥0</span>
<span class="t " style="left:767.8px;top:855.7px;font-size:13px;color:#252628;">优惠：￥0</span>
<span class="t " style="left:767.8px;top:878.6px;font-size:13px;color:#252628;">小计：￥0.00</span>
<span class="t " style="left:767.8px;top:900.5px;font-size:13px;color:#252628;">利润率：0%</span>
<span class="t " style="left:992.2px;top:788.7px;font-size:13px;color:#252628;">商品价：￥25.50</span>
<span class="t " style="left:992.2px;top:810.6px;font-size:13px;color:#252628;">素材服务费：￥0</span>
<span class="t " style="left:992.2px;top:833.5px;font-size:13px;color:#252628;">运费：￥27.62</span>
<span class="t " style="left:992.2px;top:855.7px;font-size:13px;color:#252628;">小计：￥53.12</span>
<span class="t " style="left:992.2px;top:878.6px;font-size:13px;color:#252628;">(共1件)</span>
<span class="t " style="left:1218px;top:788.7px;font-size:13px;color:#252628;">TEMU-Y2-美东仓</span>
<span class="t " style="left:1218px;top:810.6px;font-size:13px;color:#252628;">TEMU-Y2-美东仓</span>
<span class="t " style="left:1218px;top:833.5px;font-size:11px;color:#3d98f5;">查看上传pdf</span>
<svg class="b" style="left:1289px;top:838px" width="11" height="12" viewBox="0 0 11 12"><path d="M0.3 2.6h10.4M3.6 2.6V0.7h3.8v1.9" stroke="#f00" stroke-width="1.2" fill="none"/><path d="M1.9 3.2v8.2h7.2V3.2" stroke="#f00" stroke-width="1.3" fill="none"/><path d="M4.3 4.8v4.6M6.7 4.8v4.6" stroke="#f00" stroke-width="1.1"/></svg>
<span class="t " style="left:1218px;top:857.0px;font-size:11px;color:#3d98f5;">运单号生成成功</span>
<div class="b" style="left:1189px;top:775px;width:159px;height:109px;border:4px solid #f54d4d;border-radius:3px;box-sizing:border-box"></div>
<div class="b" style="left:1198px;top:829.5px;width:137px;height:30.5px;border:4px solid #f54d4d;border-radius:3px;box-sizing:border-box"></div>
<span class="t " style="left:1411.4px;top:789.4px;font-size:13px;color:#252628;">待发货</span>
<span class="t " style="left:1411.4px;top:812.0px;font-size:11px;color:#0b7ef2;">订单进度</span>
<span class="t " style="left:1411.4px;top:835.9px;font-size:11px;color:#0b7ef2;">标记备货</span>
<span class="t " style="left:1411.4px;top:859.4px;font-size:11px;color:#f00;">工厂备注</span>
<span class="t " style="left:1411.4px;top:882.9px;font-size:11px;color:#0b7ef2;">客户留言</span>
<span class="t " style="left:1583.5px;top:789.4px;font-size:13px;color:#252628;letter-spacing:0.15px">2025-12-24 02:34:46</span>
<span class="t " style="left:1583.5px;top:811.5px;font-size:13px;color:#252628;letter-spacing:0.15px">2025-12-24 10:45:03</span>
<span class="t " style="left:1583.5px;top:834.1px;font-size:13px;color:#252628;letter-spacing:0.15px">2026-01-08 15:18:06</span>
<span class="t " style="left:1811.3px;top:787.9px;font-size:11px;color:#0b7ef2;">退货/款</span>
<svg class="b" style="left:1709px;top:20px" width="19" height="18" viewBox="0 0 19 18"><circle cx="9.6" cy="7.8" r="3.1" fill="none" stroke="#fff" stroke-width="1.3"/><path d="M4.3 7.6 C4.3 4.3 6.6 2.6 9.8 2.6 C13 2.6 15.3 4.3 15.3 7.6" fill="none" stroke="#fff" stroke-width="1.2"/><rect x="2.9" y="6.4" width="2.2" height="3.3" rx="1" fill="#fff"/><rect x="14.5" y="6.4" width="2.2" height="3.3" rx="1" fill="#fff"/><path d="M2.6 16.6 L5.6 11.6 C7 13.2 8.3 13.8 9.8 13.8 C11.3 13.8 12.6 13.2 14 11.6 L17.2 16.6 Z" fill="none" stroke="#fff" stroke-width="1.3" stroke-linejoin="round"/></svg>
<svg class="b" style="left:1751px;top:21px" width="17" height="15" viewBox="0 0 17 15"><path d="M1.6 1.6 L3 1.6 L5.6 10.4 L14.6 10.4" fill="none" stroke="#fff" stroke-width="1.2" stroke-linecap="round" stroke-linejoin="round"/><path d="M4.4 4.6 L15.6 4.6 L14.6 9.6 L5.5 9.6" fill="none" stroke="#fff" stroke-width="1.2" stroke-linejoin="round"/><path d="M7.8 4.8 V9.4 M10.3 4.8 V9.4 M12.8 4.8 V9.4" stroke="#fff" stroke-width="1"/><circle cx="7" cy="12.7" r="1.15" fill="none" stroke="#fff" stroke-width="1.1"/><circle cx="12.6" cy="12.7" r="1.15" fill="none" stroke="#fff" stroke-width="1.1"/></svg>
<svg class="b" style="left:1793px;top:20px" width="13" height="16" viewBox="0 0 13 16"><path d="M6.5 2.5 C4.2 2.5 2.8 4.4 2.8 6.8 V10.6 L1.2 12.4 H11.8 L10.2 10.6 V6.8 C10.2 4.4 8.8 2.5 6.5 2.5 Z" fill="none" stroke="#fff" stroke-width="1.2" stroke-linejoin="round"/><path d="M5 13.4 C5.2 14.3 5.7 14.7 6.5 14.7 C7.3 14.7 7.8 14.3 8 13.4" fill="none" stroke="#fff" stroke-width="1.1"/></svg>
<div class="b" style="left:1796px;top:13px;width:20.5px;height:14px;border-radius:50%;background:#f00"></div>
<span class="t" style="left:1796px;top:10px;line-height:20px;font-size:10.5px;font-weight:700;color:#fff;letter-spacing:0.1px;-webkit-text-stroke:0.35px #fff">99+</span>
<svg class="b" style="left:1830px;top:23px" width="70" height="13" viewBox="0 0 70 13"><defs><clipPath id="un"><rect x="0" y="0" width="90" height="13" rx="5"/></clipPath></defs><g clip-path="url(#un)"><rect x="0" y="0" width="7" height="9" fill="#3d96f3"/><rect x="7" y="0" width="9" height="9" fill="#6aaef6"/><rect x="16" y="0" width="9" height="9" fill="#65abf5"/><rect x="25" y="0" width="9" height="9" fill="#6cb2f6"/><rect x="34" y="0" width="9" height="9" fill="#5aa6f5"/><rect x="43" y="0" width="9" height="9" fill="#4ba3f3"/><rect x="52" y="0" width="9" height="9" fill="#3f98f2"/><rect x="61" y="0" width="9" height="9" fill="#58a5f4"/><rect x="16" y="9" width="36" height="4" fill="#1a88f1"/><rect x="3" y="9" width="13" height="3" fill="#0c83f0"/></g><path d="M66 11 L69 6" stroke="#fff" stroke-width="1.2"/></svg>

</body></html>
